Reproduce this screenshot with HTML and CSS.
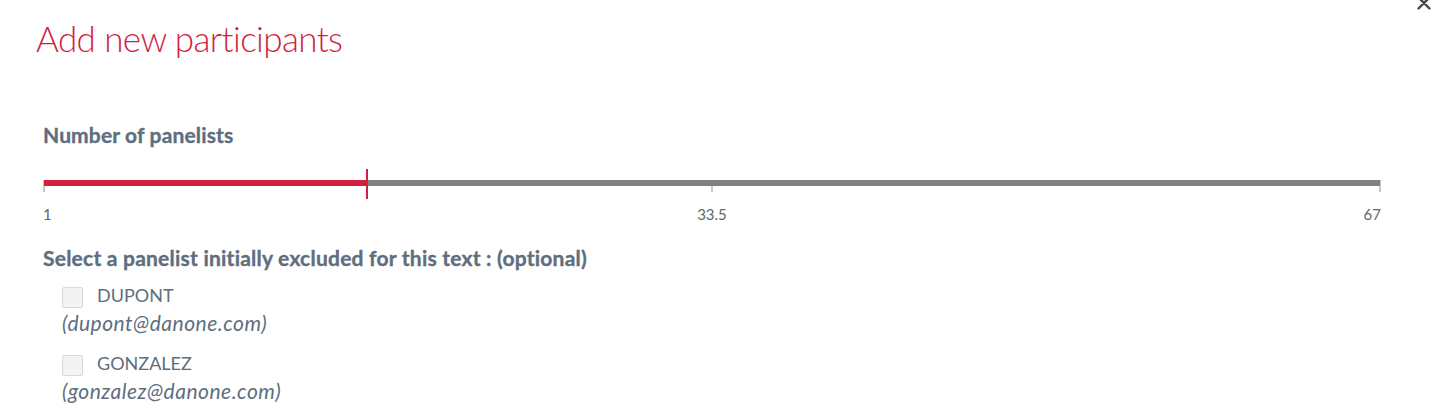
FILE: index.html
```html
<!DOCTYPE html>
<html lang="en">
<head>
<meta charset="utf-8">
<title>Add new participants</title>
<link rel="stylesheet" href="styles.css">
</head>
<body>
<div class="modal">
  <button class="close" aria-label="Close">
    <svg width="14" height="14" viewBox="0 0 14 14"><path d="M1.5 1.5 L12.5 12.5 M12.5 1.5 L1.5 12.5" stroke="#444" stroke-width="2.4" stroke-linecap="round"/></svg>
  </button>
  <header class="modal-header">
    <h1 class="title">Add new participants</h1>
  </header>
  <section class="content">
    <h2 class="field-label">Number of panelists</h2>
    <div class="slider">
      <div class="ticks"><span class="tick end"></span><span class="tick"></span><span class="tick end"></span></div>
      <div class="track"><div class="fill" style="width:24.24%"></div></div>
      <div class="handle" style="left:24.24%"></div>
    </div>
    <div class="scale"><span class="s-start">1</span><span class="s-mid">33.5</span><span class="s-end">67</span></div>
    <h3 class="select-label">Select a panelist initially excluded for this text : (optional)</h3>
    <ul class="panelists">
      <li class="panelist">
        <label class="row"><span class="checkbox"></span><span class="name">DUPONT</span></label>
        <div class="email">(dupont@danone.com)</div>
      </li>
      <li class="panelist">
        <label class="row"><span class="checkbox"></span><span class="name">GONZALEZ</span></label>
        <div class="email">(gonzalez@danone.com)</div>
      </li>
    </ul>
  </section>
</div>
</body>
</html>
```
FILE: styles.css
```css
* { box-sizing: border-box; }
html, body { margin: 0; padding: 0; background: #fff; }
body { font-family: Lato, "Source Sans Pro", "Open Sans", sans-serif; overflow: hidden; }

.modal { position: relative; display: flow-root; width: 1454px; height: 418px; }

.close {
  position: absolute; left: 1417px; top: -4px;
  width: 14px; height: 14px; padding: 0; margin: 0;
  border: 0; background: transparent; display: block;
}
.close svg { display: block; }

.modal-header { padding-left: 36px; }
.title {
  margin: 17px 0 0; font-size: 35px; line-height: 43px;
  font-weight: 300; color: #d21f3e; letter-spacing: -0.6px;
}

.content { padding: 0 73px 0 43px; display: flex; flex-direction: column; }

.field-label {
  margin: 63px 0 0; font-size: 21px; line-height: 24px;
  font-weight: 700; color: #5e6e7e; letter-spacing: 0.15px;
  -webkit-text-stroke: 0.35px currentColor;
}

.slider { position: relative; height: 30px; margin-top: 22px; }
.track { position: relative; margin-top: 11px; height: 6px; background: #808080; margin-left: 1px; margin-right: 1px; }
.fill { height: 100%; background: #d21f3e; }
.handle {
  position: absolute; top: 0; width: 2px; height: 30px;
  margin-left: -1px; background: #d21f3e;
}
.ticks {
  position: absolute; left: 0; right: 0; top: 11px; height: 12px;
  display: flex; justify-content: space-between;
}
.tick { width: 2px; height: 12px; background: #c8c8c8; }

.scale {
  margin-top: 6px; display: grid; grid-template-columns: 1fr auto 1fr;
  font-size: 15px; line-height: 19px; color: #666;
}
.s-start { justify-self: start; }
.s-mid { justify-self: center; }
.s-end { justify-self: end; }

.select-label {
  margin: 22px 0 0; font-size: 21px; line-height: 24px;
  font-weight: 700; color: #5e6e7e; letter-spacing: 0.23px;
  -webkit-text-stroke: 0.35px currentColor;
}

.panelists { list-style: none; margin: 14px 0 0; padding: 0 0 0 19px; display: flex; flex-direction: column; gap: 18px; }
.panelist { display: flex; flex-direction: column; gap: 4px; }
.row { display: flex; align-items: flex-start; gap: 14px; height: 24px; }
.checkbox {
  width: 21px; height: 21px; margin-top: 3px; flex: none;
  background: #f3f3f3; border: 1px solid #d9d9d9; border-radius: 2px;
}
.name { font-size: 18px; line-height: 22px; color: #5e6e7e; }
.email { font-size: 21px; line-height: 22px; font-style: italic; color: #5e6e7e; letter-spacing: 0.5px; }
```
